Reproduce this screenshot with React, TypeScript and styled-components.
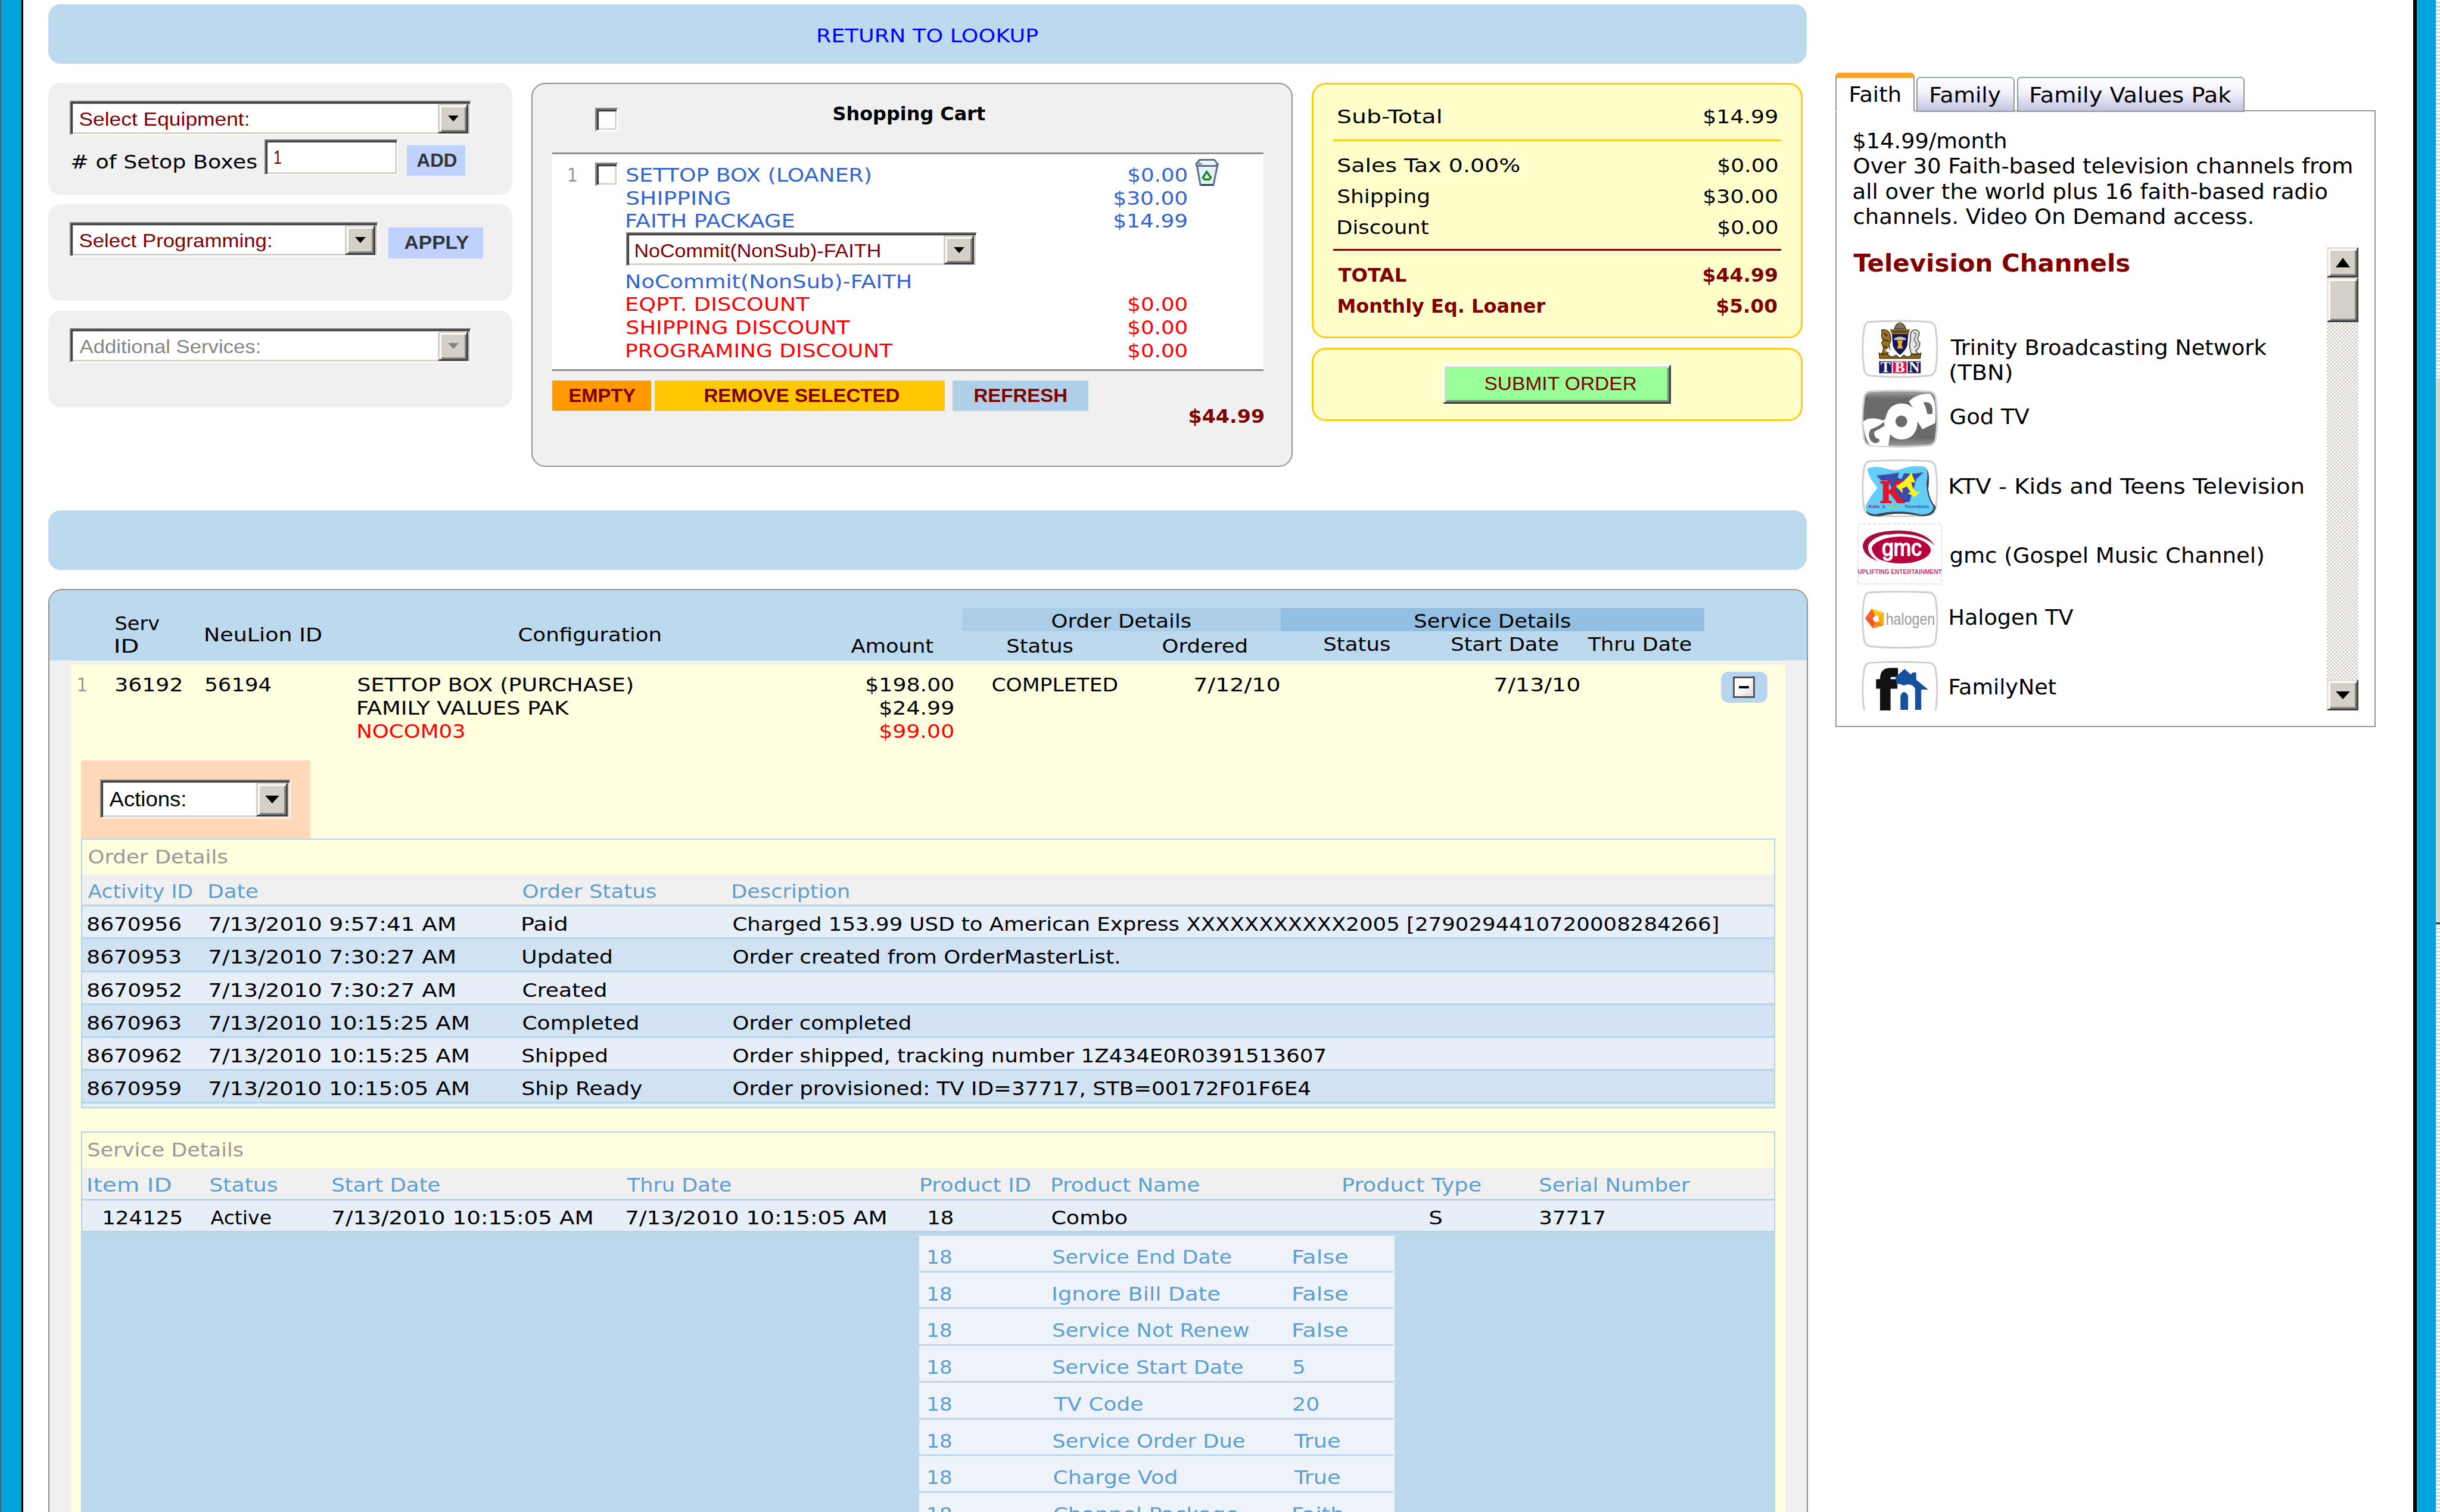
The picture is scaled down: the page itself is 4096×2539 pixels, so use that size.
import React, { useLayoutEffect, useRef, useState } from "react";
import styled, { createGlobalStyle } from "styled-components";

/* One design unit is 1/1568 of the 4096px wide page. */
const UNIT = 4096 / 1568;
const u = (n: number) => `${+(n * UNIT).toFixed(2)}px`;
/* Grid tracks from a list of column edges. */
const tracks = (...xs: number[]) =>
  xs.slice(1).map((x, i) => u(x - xs[i])).join(" ");

const VERDANA = `Verdana, "DejaVu Sans", sans-serif`;
const ARIAL = `"Liberation Sans", Arial, sans-serif`;

const Global = createGlobalStyle`
  html, body { margin: 0; padding: 0; background: #fff; overflow: hidden; }
  * { box-sizing: border-box; }
  body { font-family: ${VERDANA}; font-size: ${u(12)}; color: #000; }
`;

/* ---------- text ---------- */

const Ink = styled.span<{ $w: number; $c?: string; $s: number; $b?: boolean; $a?: boolean }>`
  display: block;
  flex: none;
  width: ${(p) => u(p.$w)};
  color: ${(p) => p.$c || "inherit"};
  font-family: ${(p) => (p.$a ? ARIAL : VERDANA)};
  font-size: ${(p) => u(p.$s)};
  font-weight: ${(p) => (p.$b ? 700 : 400)};
  white-space: pre;
`;
const Glyphs = styled.span`
  display: inline-block;
  transform-origin: 0 50%;
`;

let pen: CanvasRenderingContext2D | null = null;

type TextProps = {
  w: number;
  children: string;
  c?: string;
  s?: number;
  b?: boolean;
  a?: boolean;
};

/* Text stretched horizontally so that its ink fills a box w units wide. */
function Text({ w, children, c, s = 12, b, a }: TextProps) {
  const ref = useRef<HTMLSpanElement>(null);
  const [transform, setTransform] = useState("none");
  useLayoutEffect(() => {
    if (!ref.current) return;
    pen = pen || document.createElement("canvas").getContext("2d");
    if (!pen) return;
    const cs = getComputedStyle(ref.current);
    pen.font = `${cs.fontWeight} ${cs.fontSize} ${cs.fontFamily}`;
    const m = pen.measureText(children);
    const ink = m.actualBoundingBoxLeft + m.actualBoundingBoxRight;
    const k = ((w - 0.7) * UNIT) / ink;
    setTransform(`translateX(${m.actualBoundingBoxLeft * k + 0.6 * UNIT}px) scaleX(${k})`);
  }, [children, w, s, b, a]);
  return (
    <Ink $w={w} $c={c} $s={s} $b={b} $a={a}>
      <Glyphs ref={ref} style={{ transform }}>{children}</Glyphs>
    </Ink>
  );
}

/* ---------- page frame ---------- */

const Page = styled.div`
  display: flex;
  width: 4096px;
  height: 2539px;
  overflow: hidden;
  background: #fff;
`;
const LeftRail = styled.div`
  flex: none;
  width: ${u(14.9)};
  background: #00a3dc;
  border-left: ${u(1.1)} solid #5c5c5c;
  border-right: ${u(1.3)} solid #000;
`;
const RightRail = styled.div`
  flex: none;
  width: ${u(14.7)};
  margin-left: auto;
  background: #00a3dc;
  border-left: ${u(2.4)} solid #000;
`;
const WindowScroll = styled.div`
  flex: none;
  width: ${u(2.7)};
  display: flex;
  flex-direction: column;
  background: repeating-linear-gradient(#fff 0 ${u(1.2)}, #d9d5ce ${u(1.2)} ${u(2.4)});
`;
const WindowThumb = styled.div`
  margin-top: ${u(243)};
  height: ${u(351)};
  background: #d9d5ce;
  border-bottom: ${u(1.3)} solid #404040;
`;
const Main = styled.div`
  flex: none;
  width: ${u(1130.6)};
  margin-left: ${u(16.2)};
  padding-top: ${u(2.6)};
  display: flex;
  flex-direction: column;
`;
const Bar = styled.div<{ $mt?: number }>`
  flex: none;
  width: ${u(1129.8)};
  height: ${u(38.4)};
  margin-top: ${(p) => u(p.$mt || 0)};
  border-radius: ${u(8)};
  background: #bcd9ed;
  display: flex;
  justify-content: center;
  line-height: ${u(41)};
`;
const TopRow = styled.div`
  flex: none;
  display: flex;
  align-items: flex-start;
  height: ${u(274.7)};
  margin-top: ${u(12.4)};
`;

/* ---------- form controls ---------- */

const Field = styled.div<{ $w: number; $h?: number }>`
  flex: none;
  display: flex;
  justify-content: space-between;
  width: ${(p) => u(p.$w)};
  height: ${(p) => u(p.$h || 22)};
  line-height: ${(p) => u((p.$h || 22) - 0.4)};
  padding: ${u(1.2)} ${u(1.1)} ${u(0.4)} ${u(4.8)};
  background: #fff;
  border: ${u(1.1)} solid;
  border-color: #858585 #fff #fff #858585;
  box-shadow: inset ${u(1.2)} ${u(1.2)} #404040, inset -${u(1.1)} -${u(1.1)} #d4d0c8;
`;
const Drop = styled.span<{ $w: number }>`
  flex: none;
  display: flex;
  align-items: center;
  justify-content: center;
  width: ${(p) => u(p.$w)};
  background: #d4d0c8;
  border: ${u(1.3)} solid;
  border-color: #d4d0c8 #404040 #404040 #d4d0c8;
  box-shadow: inset ${u(1.1)} ${u(1.1)} #fff, inset -${u(1.1)} -${u(1.1)} #808080;
`;
const Lift = styled.div<{ $y: number }>`
  margin-top: ${(p) => u(p.$y)};
`;
const Caret = styled.i<{ $c?: string; $up?: boolean; $k?: number }>`
  width: 0;
  height: 0;
  border: solid transparent;
  border-width: 0 ${(p) => u(3.6 * (p.$k || 1))};
  ${(p) =>
    p.$up
      ? `border-bottom: ${u(4.8 * (p.$k || 1))} solid #000;`
      : `border-top: ${u(4 * (p.$k || 1))} solid ${p.$c || "#000"};`}
`;

type SelectProps = {
  w: number; label: string; tw: number; h?: number;
  c?: string; arrow?: string; bw?: number; big?: boolean;
};
function Select({ w, label, tw, h = 22, c = "#800000", arrow, bw = 19.5, big }: SelectProps) {
  return (
    <Field $w={w} $h={h}>
      <Lift $y={big ? -1.4 : -0.5}><Text w={tw} a c={c} s={big ? 13.2 : 12}>{label}</Text></Lift>
      <Drop $w={bw}><Caret $c={arrow} $k={big ? 1.3 : 1} /></Drop>
    </Field>
  );
}

const FlatButton = styled.button<{ $w: number; $h: number; $bg: string; $ml?: number; $mt?: number; $pr?: number }>`
  flex: none;
  display: flex;
  justify-content: center;
  width: ${(p) => u(p.$w)};
  height: ${(p) => u(p.$h)};
  margin: ${(p) => u(p.$mt || 0)} 0 0 ${(p) => u(p.$ml || 0)};
  padding: 0 ${(p) => u(p.$pr || 0)} 0 0;
  border: 0;
  background: ${(p) => p.$bg};
  line-height: ${(p) => u(p.$h)};
`;

/* ---------- left cards ---------- */

const Cards = styled.div`
  flex: none;
  width: ${u(298)};
  display: flex;
  flex-direction: column;
  gap: ${u(6.2)};
`;
const Card = styled.div<{ $h: number }>`
  height: ${(p) => u(p.$h)};
  padding: ${u(11.4)} 0 0 ${u(13.8)};
  border-radius: ${u(8)};
  background: #f0f0f0;
`;
const Line = styled.div`
  display: flex;
  align-items: flex-start;
`;
const BoxCount = styled.div`
  width: ${u(125.2)};
  padding-left: ${u(0.6)};
  line-height: ${u(14)};
  margin-top: ${u(10.4)};
`;

/* ---------- cart ---------- */

const Cart = styled.div`
  flex: none;
  width: ${u(489)};
  height: ${u(246.8)};
  margin-left: ${u(12.5)};
  padding: 0 ${u(17.6)} 0 ${u(12.6)};
  border: ${u(1)} solid #8f8f8f;
  border-radius: ${u(9)};
  background: #f0f0f0;
`;
const CartHead = styled.div`
  display: grid;
  grid-template-columns: ${tracks(355.2, 382.5, 535.3, 812)};
  height: ${u(43.8)};
  padding-top: ${u(11.2)};
  line-height: ${u(16)};
`;
const Check = styled.div<{ $mt: number }>`
  width: ${u(15.2)};
  height: ${u(15.2)};
  margin-top: ${(p) => u(p.$mt)};
  background: #fff;
  border: ${u(1.2)} solid;
  border-color: #858585 #fff #fff #858585;
  box-shadow: inset ${u(1.2)} ${u(1.2)} #404040, inset -${u(1)} -${u(1)} #d4d0c8;
`;
const CartItems = styled.div`
  width: ${u(457)};
  height: ${u(140.6)};
  padding-top: ${u(6.1)};
  background: #fff;
  border: solid #8f8f8f;
  border-width: ${u(1.3)} 0;
  line-height: ${u(14.85)};
`;
const CartLine = styled.div`
  display: grid;
  grid-template-columns: ${tracks(355.2, 365, 382.5, 402.5, 700, 762.8, 767.5, 812)};
  height: ${u(14.85)};
`;
const Cell = styled.div<{ $col?: string; $end?: boolean }>`
  grid-column: ${(p) => p.$col || "auto"};
  display: flex;
  justify-content: ${(p) => (p.$end ? "flex-end" : "flex-start")};
`;
const CartSelect = styled.div`
  margin: ${u(-0.3)} 0 ${u(2.4)} ${u(47.3)};
`;
const CartFoot = styled.div`
  display: flex;
  width: ${u(457)};
  padding-top: ${u(5.9)};
`;
const CartTotal = styled.div`
  margin-left: auto;
  margin-top: ${u(16.2)};
  line-height: ${u(14)};
`;
const TrashArt = styled.svg`
  width: ${u(16.4)};
  height: ${u(18)};
  margin-top: ${u(-3.3)};
`;

/* ---------- totals ---------- */

const Totals = styled.div`
  flex: none;
  width: ${u(315.2)};
  margin-left: ${u(12.5)};
  display: flex;
  flex-direction: column;
  gap: ${u(5.8)};
`;
const YellowCard = styled.div<{ $h: number }>`
  height: ${(p) => u(p.$h)};
  padding: 0 ${u(12.4)};
  border: ${u(1.3)} solid #ffcc11;
  border-radius: ${u(9)};
  background: #ffffcc;
`;
const Sum = styled.div`
  display: flex;
  justify-content: space-between;
  height: ${u(19.95)};
  padding: 0 ${u(2.6)} 0 ${u(2.8)};
  line-height: ${u(19.95)};
`;
const SumBlock = styled.div<{ $pt: number; $h: number; $line?: string }>`
  height: ${(p) => u(p.$h)};
  padding-top: ${(p) => u(p.$pt)};
  border-bottom: ${(p) => (p.$line ? `${u(1.5)} solid ${p.$line}` : "0")};
`;
const Submit = styled.button`
  display: flex;
  width: ${u(146.6)};
  height: ${u(25)};
  margin: ${u(9.9)} 0 0 ${u(70.6)};
  padding: 0 0 0 ${u(22)};
  background: #99ff99;
  border: ${u(1.3)} solid;
  border-color: #fff #404040 #404040 #fff;
  box-shadow: inset ${u(1.1)} ${u(1.1)} #d0dcd0, inset -${u(1.2)} -${u(1.2)} #7d937d;
  line-height: ${u(22.6)};
`;

/* ---------- orders table ---------- */

const Orders = styled.div`
  flex: none;
  width: ${u(1130.6)};
  height: ${u(620)};
  margin-top: ${u(12.3)};
  border: ${u(1)} solid #8f8f8f;
  border-radius: ${u(9)} ${u(9)} 0 0;
  background: #f0f0f0;
  overflow: hidden;
`;
const OrdersHead = styled.div`
  display: grid;
  grid-template-columns: ${tracks(32.1, 74, 131.9, 333, 546.5, 618.6, 823.4, 1095.4)};
  height: ${u(45)};
  background: #bcd9ed;
  line-height: ${u(14.85)};
`;
const HeadCell = styled.div<{ $pt: number }>`
  padding-top: ${(p) => u(p.$pt)};
`;
const Group = styled.div`
  padding-top: ${u(11.2)};
`;
const Band = styled.div<{ $bg: string; $pl: number }>`
  height: ${u(15)};
  padding-left: ${(p) => u(p.$pl)};
  line-height: ${u(17)};
  background: ${(p) => p.$bg};
`;
const GroupCols = styled.div<{ $cols: string; $mt: number }>`
  display: grid;
  grid-template-columns: ${(p) => p.$cols};
  margin-top: ${(p) => u(p.$mt)};
`;
const Sheet = styled.div`
  width: ${u(1101.6)};
  height: ${u(600)};
  margin: ${u(2.5)} 0 0 ${u(13.9)};
  padding-left: ${u(6.5)};
  background: #ffffe0;
`;
const OrderLine = styled.div`
  display: grid;
  grid-template-columns: ${tracks(52.5, 74, 131.9, 230, 500, 612.8, 637.3, 767.6, 960.2, 1106.2, 1136)};
  height: ${u(62)};
  padding-top: ${u(6)};
  line-height: ${u(14.85)};
`;
const RowNumber = styled.div`
  margin-left: ${u(-2.5)};
`;
const Stack = styled.div<{ $end?: boolean }>`
  display: flex;
  flex-direction: column;
  align-items: ${(p) => (p.$end ? "flex-end" : "flex-start")};
`;
const Collapse = styled.button`
  display: flex;
  align-items: center;
  justify-content: center;
  width: ${u(29.7)};
  height: ${u(20)};
  margin-top: ${u(-1.2)};
  padding: 0;
  border: 0;
  border-radius: ${u(5)};
  background: #b7d5ee;
`;
const CollapseBox = styled.span`
  display: flex;
  align-items: center;
  justify-content: center;
  width: ${u(14)};
  height: ${u(13.6)};
  border: ${u(1.2)} solid #555;
  background: linear-gradient(135deg, #fff 40%, #dcdcdc);
`;
const Minus = styled.i`
  width: ${u(6.4)};
  height: ${u(1.5)};
  background: #000;
`;
const Actions = styled.div`
  width: ${u(147.3)};
  height: ${u(49.8)};
  padding: ${u(12.2)} 0 0 ${u(12)};
  background: #ffd9b8;
`;
const Details = styled.div<{ $h: number; $mt?: number; $bg?: string }>`
  width: ${u(1088.4)};
  height: ${(p) => u(p.$h)};
  margin-top: ${(p) => u(p.$mt || 0)};
  border: ${u(1)} solid #b5d3e9;
  background: ${(p) => p.$bg || "#e6eff7"};
`;
const DetailsTitle = styled.div`
  height: ${u(22.6)};
  padding-left: ${u(3.3)};
  background: #ffffe0;
  line-height: ${u(22.6)};
`;
const DetailRow = styled.div<{ $cols: string; $bg: string; $h?: number; $lh?: number }>`
  display: grid;
  grid-template-columns: ${(p) => p.$cols};
  height: ${(p) => u(p.$h || 21.08)};
  line-height: ${(p) => u(p.$lh || 23.3)};
  background: ${(p) => p.$bg};
  border-bottom: ${u(1.2)} solid #b5d3e9;
`;
const Attributes = styled.div`
  width: ${u(305.4)};
  margin: ${u(2)} 0 0 ${u(537.6)};
  background: #eef3f9;
`;
const AttributeRow = styled.div`
  display: grid;
  grid-template-columns: ${tracks(591, 596.5, 677, 831, 896)};
  height: ${u(23.62)};
  margin: 0 ${u(0.6)} 0 0;
  line-height: ${u(27.6)};
  border-bottom: ${u(1.3)} solid #bfd5e9;
`;

/* ---------- packages ---------- */

const Side = styled.div`
  flex: none;
  width: ${u(347.2)};
  margin-left: ${u(17.9)};
  padding-top: ${u(46.8)};
`;
const Tabs = styled.div`
  position: relative;
  display: flex;
  align-items: flex-end;
  height: ${u(25)};
  margin-bottom: ${u(-1)};
`;
const Tab = styled.div<{ $w: number; $on?: boolean; $ml?: number }>`
  display: flex;
  justify-content: center;
  width: ${(p) => u(p.$w)};
  height: ${(p) => u(p.$on ? 25 : 22.6)};
  margin-left: ${(p) => u(p.$ml || 0)};
  padding-top: ${(p) => u(p.$on ? 0.4 : 1)};
  line-height: ${(p) => u(p.$on ? 20.8 : 21.2)};
  border: ${u(1)} solid #919b9c;
  border-top-width: ${(p) => u(p.$on ? 3.8 : 1)};
  border-top-color: ${(p) => (p.$on ? "#f9a42a" : "#91a7b4")};
  border-bottom-color: ${(p) => (p.$on ? "#fff" : "#919b9c")};
  border-radius: ${u(2.5)} ${u(2.5)} 0 0;
  background: ${(p) => (p.$on ? "#fff" : "linear-gradient(#fff, #f2f1fa 45%, #c3c3e0)")};
`;
const Panel = styled.div`
  height: ${u(396.8)};
  padding: ${u(11.2)} ${u(10.6)} 0 ${u(10.3)};
  border: ${u(1)} solid #919b9c;
  line-height: ${u(16.15)};
`;
const ScrollArea = styled.div`
  display: flex;
  justify-content: space-between;
  height: ${u(297.8)};
  margin-top: ${u(11.5)};
  overflow: hidden;
`;
const Heading = styled.h2`
  height: ${u(43.5)};
  margin: 0;
  line-height: ${u(21)};
`;
const Channel = styled.div<{ $h: number }>`
  display: grid;
  grid-template-columns: ${tracks(1191.2, 1253.1, 1490)};
  height: ${(p) => u(p.$h)};
`;
const ChannelText = styled.div<{ $pt: number }>`
  padding-top: ${(p) => u(p.$pt)};
`;
const Logo = styled.svg<{ $w: number; $h: number; $ml: number; $mt: number }>`
  display: block;
  width: ${(p) => u(p.$w)};
  height: ${(p) => u(p.$h)};
  margin: ${(p) => u(p.$mt)} 0 0 ${(p) => u(p.$ml)};
`;
const Scrollbar = styled.div`
  flex: none;
  display: flex;
  flex-direction: column;
  width: ${u(20)};
  background: repeating-conic-gradient(#d4d0c8 0 25%, #fff 0 50%) 0 0 / ${u(2.3)} ${u(2.3)};
`;
const ScrollPart = styled.div<{ $h: number; $mt?: number | "auto" }>`
  flex: none;
  display: flex;
  align-items: center;
  justify-content: center;
  height: ${(p) => u(p.$h)};
  margin-top: ${(p) => (p.$mt === "auto" ? "auto" : 0)};
  background: #d4d0c8;
  border: ${u(1.2)} solid;
  border-color: #e4e0d8 #404040 #404040 #e4e0d8;
  box-shadow: inset ${u(1.1)} ${u(1.1)} #fff, inset -${u(1.1)} -${u(1.1)} #808080;
`;

/* ---------- drawings ---------- */

const Frame = ({ y, fill = "#fff" }: { y: number; fill?: string }) => (
  <path
    transform={`translate(0 ${y})`}
    d="M120 42 Q325 30 530 42 Q560 45 570 85 Q592 228 570 370 Q560 403 530 410 Q325 430 120 410 Q90 403 82 370 Q60 228 82 85 Q90 45 120 42Z"
    fill={fill}
    stroke="#cfcfcf"
    strokeWidth="12"
  />
);

const Trash = () => (
  <TrashArt viewBox="50 56 184 194" preserveAspectRatio="none">
    <path d="M72 102 L98 240 H192 L222 98Z" fill="#e3f2fd" stroke="#5f7290" strokeWidth="13" />
    <path d="M92 66 H198 L222 96 L208 108 H72 L66 94Z" fill="#edf4fb" stroke="#566480" strokeWidth="11" />
    <path d="M70 92 L92 78 L120 106 H74Z" fill="#8d9fc4" />
    <path d="M104 240 H190" stroke="#26405c" strokeWidth="11" />
    <path d="M143 148 L116 190 L128 202 H162 L172 188Z" fill="none" stroke="#0c8a0c" strokeWidth="14" strokeLinejoin="round" />
  </TrashArt>
);

const TbnLogo = () => (
  <Logo $w={50} $h={37.6} $ml={5.1} $mt={3.4} viewBox="60 28 532 400" preserveAspectRatio="none">
    <Frame y={0} />
    <path d="M290 90 Q296 54 325 50 Q358 54 366 90Z" fill="#77736c" stroke="#3d3524" strokeWidth="6" />
    <circle cx="325" cy="50" r="9" fill="#a9801c" />
    <path d="M262 96 H392 L384 122 H272Z" fill="#5b4a28" stroke="#a77c18" strokeWidth="7" />
    <path d="M205 112 Q190 92 222 96 Q250 100 258 128 Q274 168 252 196 Q262 226 248 256 L200 262 Q220 232 210 206 Q194 184 212 170 Q194 142 205 112Z" fill="#9a7420" stroke="#4a3a18" strokeWidth="6" />
    <path d="M218 120 L240 140 M214 162 L250 176 M218 206 L244 224" stroke="#2e2614" strokeWidth="8" />
    <path d="M226 240 L250 214 L262 258Z" fill="#fff" />
    <path d="M400 120 Q412 92 440 98 Q470 112 452 142 Q440 160 462 186 Q464 222 434 238 L452 262 H404 Q384 200 398 170Z" fill="#e6e6e6" stroke="#55504a" strokeWidth="7" />
    <path d="M418 118 Q444 116 432 142 Q414 168 440 188 Q446 210 422 216" fill="none" stroke="#777" strokeWidth="8" />
    <path d="M272 126 H384 L376 206 Q358 246 327 268 Q294 246 278 206Z" fill="#14145c" />
    <path d="M284 158 Q326 128 370 158 L362 166 H292Z" fill="#c9c4b4" />
    <path d="M308 170 H346 L338 198 L348 224 H306 L316 198Z" fill="#e4b032" />
    <path d="M184 256 Q214 272 240 262 Q270 296 300 270 L326 292 L352 270 Q388 296 410 262 Q440 272 470 256 L464 292 H188Z" fill="#8c6a18" stroke="#3f300e" strokeWidth="6" />
    <path d="M184 312 H270 V394 H184Z M380 312 H468 V394 H380Z" fill="#1b1b62" />
    <path d="M278 312 H372 V394 H278Z" fill="#d81e48" />
    <g fill="#fff" fontFamily="Liberation Serif, serif" fontWeight="700" fontSize="104" textAnchor="middle">
      <text x="228" y="388">T</text>
      <text x="325" y="388">B</text>
      <text x="424" y="388">N</text>
    </g>
  </Logo>
);

const GodLogo = () => (
  <Logo $w={50} $h={37.6} $ml={5.1} $mt={3.6} viewBox="60 500 532 400" preserveAspectRatio="none">
    <defs>
      <linearGradient id="god" x1="0" y1="0" x2="0" y2="1">
        <stop offset="0" stopColor="#a8a8a8" />
        <stop offset=".14" stopColor="#6a6a6a" />
        <stop offset=".84" stopColor="#6a6a6a" />
        <stop offset="1" stopColor="#a0a0a0" />
      </linearGradient>
    </defs>
    <Frame y={472} fill="url(#god)" />
    <path d="M76 720 Q120 680 212 712 L228 700 Q244 600 336 596 Q390 596 416 630 L388 580 Q440 528 530 528 Q580 560 568 730 L480 772 L448 720 Q440 836 340 842 Q290 842 260 806 L246 888 L130 884 Q84 850 76 720Z" fill="#fff" />
    <circle cx="336" cy="718" r="40" fill="#6a6a6a" />
    <path d="M486 588 Q560 578 548 668 L514 668 Q504 620 486 588Z" fill="#6a6a6a" />
    <path d="M216 722 L222 748 L150 790 Q148 836 184 838 L186 856 Q150 880 126 848 Q100 800 130 770 Q170 762 216 722Z" fill="#6a6a6a" />
  </Logo>
);

const KtvLogo = () => (
  <Logo $w={50} $h={37.6} $ml={5.1} $mt={3.8} viewBox="60 974 532 400" preserveAspectRatio="none">
    <Frame y={946} />
    <path d="M500 1034 Q536 1050 520 1180 Q530 1260 572 1300 Q560 1370 470 1364 Q300 1330 190 1366 Q110 1370 96 1330Z" fill="#3c4650" />
    <path d="M104 1040 Q150 1014 236 1040 Q300 1060 340 1040 Q420 1012 500 1028 Q524 1050 508 1140 Q508 1230 556 1300 Q552 1352 470 1354 Q320 1312 160 1352 Q92 1350 90 1296 Q120 1230 174 1170 Q110 1100 104 1040Z" fill="#62cdf6" />
    <path d="M166 1086 Q250 1080 320 1066 L312 1100 L336 1110 L356 1070 Q420 1080 488 1064 L440 1110 L392 1266 L330 1270 L240 1120 L200 1122Z" fill="#3d4ba8" />
    <text x="192" y="1270" fontFamily="Liberation Serif, serif" fontWeight="700" fontSize="214" textLength="165" lengthAdjust="spacingAndGlyphs" fill="#e0162f" stroke="#e0162f" strokeWidth="8">K</text>
    <path d="M404 1066 L432 1136 L404 1130 Q410 1180 442 1200 L464 1196 L428 1234 L378 1206 L400 1200 L374 1160 L342 1176 L346 1208 L298 1158 Q360 1130 404 1066Z" fill="#fdf21c" />
    <g fontFamily="Liberation Sans, sans-serif" fontWeight="700" fontSize="28">
      <text x="112" y="1310" textLength="76" lengthAdjust="spacingAndGlyphs" fill="#8a2466">Kids</text>
      <text x="206" y="1310" fill="#2c5aa0">&amp;</text>
      <text x="244" y="1310" textLength="88" lengthAdjust="spacingAndGlyphs" fill="#b9c64a">Teens</text>
      <text x="356" y="1310" textLength="168" lengthAdjust="spacingAndGlyphs" fill="#2c5aa0">Television</text>
    </g>
  </Logo>
);

const GmcLogo = () => (
  <Logo $w={54.6} $h={39.8} $ml={3} $mt={1.2} viewBox="36 36 582 424" preserveAspectRatio="none">
    <rect x="40" y="42" width="574" height="412" fill="#fffdfd" stroke="#d6dfdc" strokeWidth="6" strokeDasharray="22 12" />
    <path d="M566 190 Q500 88 316 88 Q82 94 72 194 Q78 270 190 302 Q100 240 112 186 Q150 116 320 110 Q480 112 566 190Z" fill="#a5103f" />
    <ellipse cx="334" cy="222" rx="204" ry="92" fill="#b8003f" />
    <path d="M186 304 Q96 250 112 190 Q140 130 250 112 Q130 160 134 214 Q146 266 200 296Z" fill="#fff" />
    <text x="204" y="262" fontFamily="Liberation Sans, sans-serif" fontWeight="400" fontSize="160" textLength="272" lengthAdjust="spacingAndGlyphs" fill="#fff" stroke="#fff" strokeWidth="7">gmc</text>
    <text x="38" y="388" fontFamily="Liberation Sans, sans-serif" fontWeight="700" fontSize="46" textLength="576" lengthAdjust="spacingAndGlyphs" fill="#b5456e">UPLIFTING ENTERTAINMENT</text>
  </Logo>
);

const HalogenLogo = () => (
  <Logo $w={50} $h={37.6} $ml={5.1} $mt={2.4} viewBox="60 494 532 400" preserveAspectRatio="none">
    <Frame y={468} />
    <path d="M88 686 L134 620 L160 664 L138 690Z" fill="#f4672c" />
    <path d="M134 620 L216 648 L184 672 L156 664Z" fill="#ffcb12" />
    <path d="M216 648 V734 L180 712 V668Z" fill="#fbac18" />
    <path d="M216 734 L142 756 L144 710 H182Z" fill="#f88a12" />
    <path d="M88 686 L142 756 L152 708 L136 684Z" fill="#f2562e" />
    <text x="230" y="730" fontFamily="Liberation Sans, sans-serif" fontSize="112" textLength="336" lengthAdjust="spacingAndGlyphs" fill="#9a9a9a">halogen</text>
  </Logo>
);

const FamilyNetLogo = () => (
  <Logo $w={50} $h={37.6} $ml={5.1} $mt={4.1} viewBox="60 968 532 400" preserveAspectRatio="none">
    <Frame y={942} />
    <text x="166" y="1306" fontFamily="DejaVu Sans, sans-serif" fontWeight="700" fontSize="360" textLength="136" lengthAdjust="spacingAndGlyphs" fill="#111" stroke="#111" strokeWidth="20">f</text>
    <path d="M296 1082 L358 1026 L400 1064 L414 1050 H438 V1100 L520 1168 H472 V1306 H430 V1160 Q404 1116 352 1140 Q320 1122 302 1134Z" fill="#17509e" />
    <path d="M330 1306 V1210 Q340 1186 356 1184 Q374 1190 382 1210 V1306Z" fill="#17509e" />
  </Logo>
);

/* ---------- data ---------- */

const BLUE = "#3465cf";
const LINK = "#5e9fd2";
const MAROON = "#800000";

type CartRow = [string, number, string, number, string];
const cartTop: CartRow[] = [
  ["SETTOP BOX (LOANER)", 157.2, "$0.00", 38, BLUE],
  ["SHIPPING", 66.6, "$30.00", 47.2, BLUE],
  ["FAITH PACKAGE", 107.9, "$14.99", 47.2, BLUE],
];
const cartBottom: CartRow[] = [
  ["NoCommit(NonSub)-FAITH", 182.8, "", 0, BLUE],
  ["EQPT. DISCOUNT", 118.3, "$0.00", 38, "#f00"],
  ["SHIPPING DISCOUNT", 144.3, "$0.00", 38, "#f00"],
  ["PROGRAMING DISCOUNT", 171.7, "$0.00", 38, "#f00"],
];

const activity: [string, string, number, string, number, string, number][] = [
  ["8670956", "7/13/2010 9:57:41 AM", 158, "Paid", 29, "Charged 153.99 USD to American Express XXXXXXXXXXX2005 [2790294410720008284266]", 633.6],
  ["8670953", "7/13/2010 7:30:27 AM", 158, "Updated", 57.8, "Order created from OrderMasterList.", 248.6],
  ["8670952", "7/13/2010 7:30:27 AM", 158, "Created", 54.2, "", 0],
  ["8670963", "7/13/2010 10:15:25 AM", 166.7, "Completed", 74.8, "Order completed", 114.6],
  ["8670962", "7/13/2010 10:15:25 AM", 166.7, "Shipped", 54.8, "Order shipped, tracking number 1Z434E0R0391513607", 381.4],
  ["8670959", "7/13/2010 10:15:05 AM", 166.7, "Ship Ready", 77.4, "Order provisioned: TV ID=37717, STB=00172F01F6E4", 371.8],
];

const attributes: [string, number, string, number][] = [
  ["Service End Date", 114.8, "False", 35.4],
  ["Ignore Bill Date", 107.4, "False", 35.4],
  ["Service Not Renew", 126.4, "False", 35.4],
  ["Service Start Date", 122.3, "5", 7.6],
  ["TV Code", 57.8, "20", 16.6],
  ["Service Order Due", 123.4, "True", 30.4],
  ["Charge Vod", 79.8, "True", 30.4],
  ["Channel Package", 119.2, "Faith", 32.4],
];

const channels: { logo: React.ReactNode; h: number; pt: number; lines: [string, number][] }[] = [
  { logo: <TbnLogo />, h: 44.4, pt: 13.2, lines: [["Trinity Broadcasting Network", 204.4], ["(TBN)", 40.2]] },
  { logo: <GodLogo />, h: 44.6, pt: 13.2, lines: [["God TV", 51.8]] },
  { logo: <KtvLogo />, h: 43.6, pt: 13.3, lines: [["KTV - Kids and Teens Television", 227.8]] },
  { logo: <GmcLogo />, h: 42.1, pt: 14.3, lines: [["gmc (Gospel Music Channel)", 201.8]] },
  { logo: <HalogenLogo />, h: 43.4, pt: 11.9, lines: [["Halogen TV", 80]] },
  { logo: <FamilyNetLogo />, h: 44, pt: 13.4, lines: [["FamilyNet", 68.8]] },
];

const orderCols = tracks(53.5, 56.3, 134.6, 335.8, 470.9, 1140);
const serviceCols = tracks(53.5, 56.7, 135.4, 213.7, 402.4, 591.9, 676.2, 863.5, 989.8, 1140);

/* ---------- sections ---------- */

const CartEntry = ({ row, first }: { row: CartRow; first?: boolean }) => (
  <CartLine>
    <Cell $col="2">{first && <Text w={6} c="#999">1</Text>}</Cell>
    <Cell $col="3">{first && <Check $mt={-0.7} />}</Cell>
    <Cell $col="4"><Text w={row[1]} c={row[4]}>{row[0]}</Text></Cell>
    <Cell $col="5" $end>{row[2] && <Text w={row[3]} c={row[4]}>{row[2]}</Text>}</Cell>
    <Cell $col="7">{first && <Trash />}</Cell>
  </CartLine>
);

const SumLine = ({ l, lw, r, rw, strong }: { l: string; lw: number; r: string; rw: number; strong?: boolean }) => (
  <Sum>
    <Text w={lw} b={strong} c={strong ? MAROON : undefined}>{l}</Text>
    <Text w={rw} b={strong} c={strong ? MAROON : undefined}>{r}</Text>
  </Sum>
);

export default function App() {
  return (
    <Page>
      <Global />
      <LeftRail />
      <Main>
        <Bar><Text w={141.8} c="#0000ff">RETURN TO LOOKUP</Text></Bar>

        <TopRow>
          <Cards>
            <Card $h={71.9}>
              <Select w={258} label="Select Equipment:" tw={109} />
              <Line>
                <BoxCount><Text w={119.4}>{"# of Setop Boxes"}</Text></BoxCount>
                <Lift $y={2.8}>
                  <Field $w={85.6} $h={22.8}><Lift $y={-1.2}><Text w={5} a c={MAROON}>1</Text></Lift></Field>
                </Lift>
                <FlatButton $w={37.6} $h={19.8} $bg="#bfd2ff" $ml={5.8} $mt={6.5} $pr={0.4}>
                  <Text w={26.4} a b c="#333">ADD</Text>
                </FlatButton>
              </Line>
            </Card>
            <Card $h={62}>
              <Line>
                <Select w={198.2} label="Select Programming:" tw={123.6} />
                <FlatButton $w={61} $h={19.8} $bg="#bfd2ff" $ml={6.4} $mt={3.4} $pr={2.4}>
                  <Text w={42.4} a b c="#333">APPLY</Text>
                </FlatButton>
              </Line>
            </Card>
            <Card $h={62.2}>
              <Select w={258} label="Additional Services:" tw={116.2} c="#858585" arrow="#858585" />
            </Card>
          </Cards>

          <Cart>
            <CartHead>
              <Cell $col="2"><Check $mt={4} /></Cell>
              <Cell $col="3"><Text w={98.2} b>Shopping Cart</Text></Cell>
            </CartHead>
            <CartItems>
              {cartTop.map((row, i) => <CartEntry key={row[0]} row={row} first={i === 0} />)}
              <CartSelect><Select w={225.6} h={21.8} label="NoCommit(NonSub)-FAITH" tw={158} /></CartSelect>
              {cartBottom.map((row) => <CartEntry key={row[0]} row={row} />)}
            </CartItems>
            <CartFoot>
              <FlatButton $w={63.4} $h={19.8} $bg="#ff9900" $pr={0.6}><Text w={43} a b c={MAROON}>EMPTY</Text></FlatButton>
              <FlatButton $w={186.3} $h={19.8} $bg="#ffc800" $ml={2.4} $pr={3.4}><Text w={125.6} a b c={MAROON}>REMOVE SELECTED</Text></FlatButton>
              <FlatButton $w={87} $h={19.8} $bg="#b0cfe9" $ml={5.2} $pr={2}><Text w={59.6} a b c={MAROON}>REFRESH</Text></FlatButton>
              <CartTotal><Text w={48.4} b c={MAROON}>$44.99</Text></CartTotal>
            </CartFoot>
          </Cart>

          <Totals>
            <YellowCard $h={164.2}>
              <SumBlock $pt={10.6} $h={36.2} $line="#ffcc11">
                <SumLine l="Sub-Total" lw={66.4} r="$14.99" rw={47.6} />
              </SumBlock>
              <SumBlock $pt={5.8} $h={70.6} $line={MAROON}>
                <SumLine l="Sales Tax 0.00%" lw={117.4} r="$0.00" rw={38.6} />
                <SumLine l="Shipping" lw={59} r="$30.00" rw={47.6} />
                <SumLine l="Discount" lw={58.8} r="$0.00" rw={38.6} />
              </SumBlock>
              <SumBlock $pt={5.6} $h={50}>
                <SumLine l="TOTAL" lw={44.6} r="$44.99" rw={48} strong />
                <SumLine l="Monthly Eq. Loaner" lw={134} r="$5.00" rw={39.2} strong />
              </SumBlock>
            </YellowCard>
            <YellowCard $h={47.4}>
              <Submit><Text w={98.4} a c={MAROON}>SUBMIT ORDER</Text></Submit>
            </YellowCard>
          </Totals>
        </TopRow>

        <Bar />

        <Orders>
          <OrdersHead>
            <div />
            <HeadCell $pt={13.8}><Text w={28.6}>Serv</Text><Text w={15}>ID</Text></HeadCell>
            <HeadCell $pt={21.2}><Text w={75}>NeuLion ID</Text></HeadCell>
            <HeadCell $pt={21.2}><Text w={92}>Configuration</Text></HeadCell>
            <HeadCell $pt={28.6}><Text w={53.6}>Amount</Text></HeadCell>
            <Group>
              <Band $bg="#abcde8" $pl={57.1}><Text w={90}>Order Details</Text></Band>
              <GroupCols $mt={2.4} $cols={tracks(618.6, 647.2, 746.6, 823)}>
                <div />
                <Text w={42.4}>Status</Text>
                <Text w={54.8}>Ordered</Text>
              </GroupCols>
            </Group>
            <Group>
              <Band $bg="#93bfe2" $pl={85.6}><Text w={100.4}>Service Details</Text></Band>
              <GroupCols $mt={1.2} $cols={tracks(823.4, 850.8, 932.7, 1019.6, 1095)}>
                <div />
                <Text w={42.6}>Status</Text>
                <Text w={68.8}>Start Date</Text>
                <Text w={67.4}>Thru Date</Text>
              </GroupCols>
            </Group>
          </OrdersHead>

          <Sheet>
            <OrderLine>
              <RowNumber><Text w={6} c="#999">1</Text></RowNumber>
              <Text w={42.6}>36192</Text>
              <Text w={42.6}>56194</Text>
              <Stack>
                <Text w={176.8}>SETTOP BOX (PURCHASE)</Text>
                <Text w={136.4}>FAMILY VALUES PAK</Text>
                <Text w={68.8} c="#f00">NOCOM03</Text>
              </Stack>
              <Stack $end>
                <Text w={56.4}>$198.00</Text>
                <Text w={47.6}>$24.99</Text>
                <Text w={47.6} c="#f00">$99.00</Text>
              </Stack>
              <div />
              <Text w={81.2}>COMPLETED</Text>
              <Text w={55}>7/12/10</Text>
              <Text w={54.8}>7/13/10</Text>
              <Collapse><CollapseBox><Minus /></CollapseBox></Collapse>
            </OrderLine>

            <Actions>
              <Select w={122.4} h={24.8} label="Actions:" tw={49.4} c="#000" bw={20} big />
            </Actions>

            <Details $h={173.6}>
              <DetailsTitle><Text w={89.8} c="#999">Order Details</Text></DetailsTitle>
              <DetailRow $cols={orderCols} $bg="#f0f0f0" $h={20.6} $lh={22.2}>
                <div />
                <Text w={67.8} c={LINK}>Activity ID</Text>
                <Text w={31.6} c={LINK}>Date</Text>
                <Text w={86.2} c={LINK}>Order Status</Text>
                <Text w={75.2} c={LINK}>Description</Text>
              </DetailRow>
              {activity.map((r, i) => (
                <DetailRow key={r[0]} $cols={orderCols} $bg={i % 2 ? "#d1e3f2" : "#e6eff7"}>
                  <div />
                  <Text w={60.2}>{r[0]}</Text>
                  <Text w={r[2]}>{r[1]}</Text>
                  <Text w={r[4]}>{r[3]}</Text>
                  {r[5] && <Text w={r[6]}>{r[5]}</Text>}
                </DetailRow>
              ))}
            </Details>

            <Details $h={400} $mt={15} $bg="#bcd8ed">
              <DetailsTitle><Text w={99.8} c="#999">Service Details</Text></DetailsTitle>
              <DetailRow $cols={serviceCols} $bg="#f0f0f0" $h={21} $lh={22.6}>
                <div />
                <Text w={53.8} c={LINK}>Item ID</Text>
                <Text w={43.4} c={LINK}>Status</Text>
                <Text w={69.4} c={LINK}>Start Date</Text>
                <Text w={67.8} c={LINK}>Thru Date</Text>
                <Text w={70.8} c={LINK}>Product ID</Text>
                <Text w={95} c={LINK}>Product Name</Text>
                <Text w={88.8} c={LINK}>Product Type</Text>
                <Text w={96.8} c={LINK}>Serial Number</Text>
              </DetailRow>
              <DetailRow
                $cols={tracks(53.5, 66.9, 135.4, 213.7, 402.4, 597, 675.9, 918.8, 989.8, 1140)}
                $bg="#e6eff7"
                $h={20.6}
                $lh={22.6}
              >
                <div />
                <Text w={50.6}>124125</Text>
                <Text w={39.4}>Active</Text>
                <Text w={167}>7/13/2010 10:15:05 AM</Text>
                <Text w={167}>7/13/2010 10:15:05 AM</Text>
                <Text w={15.8}>18</Text>
                <Text w={49}>Combo</Text>
                <Text w={8.4}>S</Text>
                <Text w={42.2}>37717</Text>
              </DetailRow>
              <Attributes>
                {attributes.map((r) => (
                  <AttributeRow key={r[0]}>
                    <div />
                    <Text w={15.2} c={LINK}>18</Text>
                    <Text w={r[1]} c={LINK}>{r[0]}</Text>
                    <Text w={r[3]} c={LINK}>{r[2]}</Text>
                  </AttributeRow>
                ))}
              </Attributes>
            </Details>
          </Sheet>
        </Orders>
      </Main>

      <Side>
        <Tabs>
          <Tab $w={50.6} $on><Text w={32.6} s={13.3}>Faith</Text></Tab>
          <Tab $w={63} $ml={1.4}><Text w={45.4} s={13.3}>Family</Text></Tab>
          <Tab $w={146} $ml={1.8}><Text w={129.6} s={13.3}>Family Values Pak</Text></Tab>
        </Tabs>
        <Panel>
          <Text w={98.6} s={13.3}>$14.99/month</Text>
          <Text w={320.6} s={13.3}>Over 30 Faith-based television channels from</Text>
          <Text w={305} s={13.3}>all over the world plus 16 faith-based radio</Text>
          <Text w={257} s={13.3}>channels. Video On Demand access.</Text>
          <ScrollArea>
            <div>
              <Heading><Text w={178.2} s={15.4} b c={MAROON}>Television Channels</Text></Heading>
              {channels.map((ch) => (
                <Channel key={ch.lines[0][0]} $h={ch.h}>
                  {ch.logo}
                  <ChannelText $pt={ch.pt}>
                    {ch.lines.map(([t, w]) => <Text key={t} w={w} s={13.3}>{t}</Text>)}
                  </ChannelText>
                </Channel>
              ))}
            </div>
            <Scrollbar>
              <ScrollPart $h={19.6}><Caret $up $k={1.3} /></ScrollPart>
              <ScrollPart $h={28.6} />
              <ScrollPart $h={19.8} $mt="auto"><Caret $k={1.3} /></ScrollPart>
            </Scrollbar>
          </ScrollArea>
        </Panel>
      </Side>

      <RightRail />
      <WindowScroll><WindowThumb /></WindowScroll>
    </Page>
  );
}
